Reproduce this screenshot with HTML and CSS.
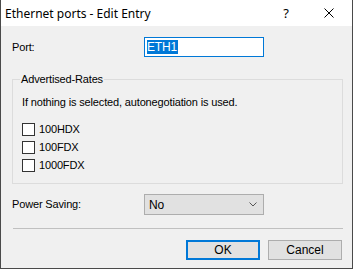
FILE: index.html
```html
<!DOCTYPE html>
<html lang="en">
<head>
<meta charset="UTF-8">
<meta name="viewport" content="width=device-width, initial-scale=1.0">
<title>Ethernet ports - Edit Entry</title>
    <link rel="stylesheet" href="styles.css">
</head>
<body>
    <div class="window">
        <!-- title bar -->
        <div class="titlebar">
            <span class="title">Ethernet ports - Edit Entry</span>
            <span class="help">?</span>
            <svg class="close" width="10" height="10" viewBox="0 0 10 10">
                <path d="M0.5 0.5 L9.5 9.5 M9.5 0.5 L0.5 9.5" stroke="#000" stroke-width="1" fill="none"/>
            </svg>
        </div>

        <div class="content">
            <!-- port -->
            <div class="row port-row">
                <label class="label">Port:</label>
                <div class="textbox"><span class="selected">ETH1</span></div>
            </div>

            <!-- advertised rates -->
            <fieldset class="group">
                <legend>Advertised-Rates</legend>
                <p class="hint">If nothing is selected, autonegotiation is used.</p>
                <div class="check"><span class="box"></span><span>100HDX</span></div>
                <div class="check"><span class="box"></span><span>100FDX</span></div>
                <div class="check"><span class="box"></span><span>1000FDX</span></div>
            </fieldset>

            <!-- power saving -->
            <div class="row power-row">
                <label class="label">Power Saving:</label>
                <div class="combo">
                    <span>No</span>
                    <svg class="arrow" width="8" height="5" viewBox="0 0 8 5">
                        <path d="M0.5 0.5 L4 4 L7.5 0.5" stroke="#555" stroke-width="1" fill="none"/>
                    </svg>
                </div>
            </div>

            <div class="separator"></div>

            <div class="buttons">
                <button class="btn default">OK</button>
                <button class="btn">Cancel</button>
            </div>
        </div>
    </div>
</body>
</html>
```

FILE: styles.css
```css
body{
    margin: 0;
    background-color: #ffffff;
}
.window{
    width: 353px;
    height: 269px;
    box-sizing: border-box;
    border: 1px solid #4a4a4a;
    border-top: none;
    background-color: #f0f0f0;
    font-family: "Liberation Sans", Arial, sans-serif;
    font-size: 11px;
    letter-spacing: -0.15px;
    color: #000000;
}
.titlebar{
    height: 26px;
    background-color: #ffffff;
    display: flex;
    align-items: center;
    font-family: "Noto Sans", "Open Sans", sans-serif;
    font-size: 12px;
    letter-spacing: 0;
}
.title{
    margin-left: 4px;
    flex: 1;
}
.help{
    font-size: 13px;
    margin-right: 35px;
}
.close{
    margin-right: 18px;
}
.content{
    padding: 0 9px 0 11px;
}
.row{
    display: flex;
    align-items: center;
}
.label{
    width: 132px;
    line-height: 13px;
}
.port-row{
    margin-top: 11px;
}
.textbox{
    width: 120px;
    height: 20px;
    box-sizing: border-box;
    border: 1px solid #0078d7;
    background-color: #ffffff;
    padding: 2px 0 0 2px;
}
.selected{
    display: inline-block;
    background-color: #0078d7;
    color: #ffffff;
    line-height: 14px;
    padding-right: 1px;
    font-size: 12px;
}
.group{
    margin: 16px 0 0 0;
    padding: 10px 0 9px 9px;
    border: 1px solid #dcdcdc;
    min-width: 0;
}
.group legend{
    margin-left: -2px;
    padding: 0 1px;
    line-height: 13px;
}
.hint{
    margin: 0;
    line-height: 13px;
}
.check{
    display: flex;
    align-items: center;
    height: 18px;
    line-height: 13px;
}
.hint + .check{
    margin-top: 11px;
}
.box{
    width: 13px;
    height: 13px;
    box-sizing: border-box;
    border: 1px solid #333333;
    background-color: #ffffff;
    margin-right: 4px;
}
.power-row{
    margin-top: 10px;
}
.combo{
    width: 120px;
    height: 21px;
    box-sizing: border-box;
    border: 1px solid #adadad;
    background-color: #e1e1e1;
    display: flex;
    align-items: center;
    justify-content: space-between;
    padding: 0 6px 0 4px;
    font-size: 12px;
}
.separator{
    height: 1px;
    background-color: #c0c0c0;
    margin: 13px 0 0 1px;
}
.buttons{
    display: flex;
    justify-content: flex-end;
    gap: 8px;
    margin-top: 11px;
    padding-right: 1px;
}
.btn{
    width: 74px;
    height: 20px;
    box-sizing: border-box;
    border: 1px solid #adadad;
    background-color: #e1e1e1;
    font-family: "Liberation Sans", Arial, sans-serif;
    font-size: 12px;
    color: #000000;
    padding: 0;
}
.btn.default{
    border: 2px solid #0078d7;
}
```
